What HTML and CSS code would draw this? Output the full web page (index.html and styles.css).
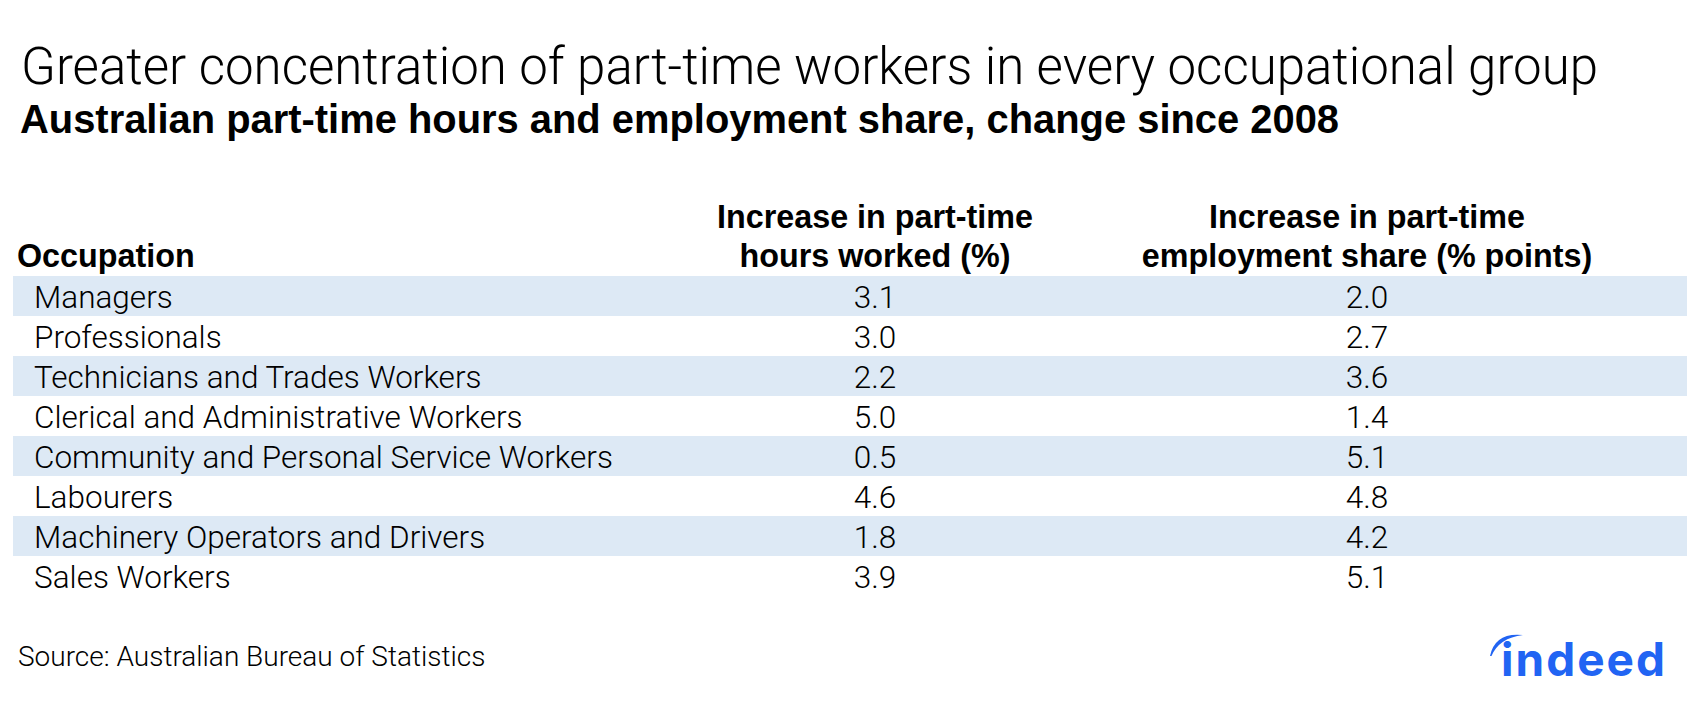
FILE: index.html
```html
<!DOCTYPE html>
<html lang="en">
<head>
<meta charset="utf-8">
<title>Part-time workers by occupation</title>
<link rel="stylesheet" href="styles.css">
</head>
<body>
<div class="page">
  <h1 class="title">Greater concentration of part-time workers in every occupational group</h1>
  <h2 class="subtitle">Australian part-time hours and employment share, change since 2008</h2>

  <div class="table">
    <div class="thead">
      <div class="th occ">Occupation</div>
      <div class="th num">Increase in part-time<br>hours worked (%)</div>
      <div class="th num">Increase in part-time<br>employment share (% points)</div>
      <div class="th"></div>
    </div>
    <div class="tr band"><div class="td occ">Managers</div><div class="td num">3.1</div><div class="td num">2.0</div><div class="td"></div></div>
    <div class="tr"><div class="td occ">Professionals</div><div class="td num">3.0</div><div class="td num">2.7</div><div class="td"></div></div>
    <div class="tr band"><div class="td occ">Technicians and Trades Workers</div><div class="td num">2.2</div><div class="td num">3.6</div><div class="td"></div></div>
    <div class="tr"><div class="td occ">Clerical and Administrative Workers</div><div class="td num">5.0</div><div class="td num">1.4</div><div class="td"></div></div>
    <div class="tr band"><div class="td occ">Community and Personal Service Workers</div><div class="td num">0.5</div><div class="td num">5.1</div><div class="td"></div></div>
    <div class="tr"><div class="td occ">Labourers</div><div class="td num">4.6</div><div class="td num">4.8</div><div class="td"></div></div>
    <div class="tr band"><div class="td occ">Machinery Operators and Drivers</div><div class="td num">1.8</div><div class="td num">4.2</div><div class="td"></div></div>
    <div class="tr"><div class="td occ">Sales Workers</div><div class="td num">3.9</div><div class="td num">5.1</div><div class="td"></div></div>
  </div>

  <div class="footer">
    <p class="source">Source: Australian Bureau of Statistics</p>
    <div class="logo">
      <svg class="logo-arc" width="36" height="26" viewBox="0 0 36 26" aria-hidden="true">
        <path d="M1 24 Q6 0 34 3 Q10 6 2.5 24 Z" fill="#2164f3"/>
      </svg>
      <span class="logo-word">indeed</span>
    </div>
  </div>
</div>
</body>
</html>
```

FILE: styles.css
```css
html, body {
  margin: 0;
  padding: 0;
  background: #ffffff;
}

body {
  font-family: "Liberation Sans", Arial, sans-serif;
  color: #000000;
}

.page {
  width: 1687px;
  height: 718px;
  padding-top: 39px;
  box-sizing: border-box;
  display: flex;
  flex-direction: column;
}

.title {
  margin: 0 0 0 21px;
  font-family: Roboto, "Liberation Sans", sans-serif;
  font-weight: 300;
  font-size: 51px;
  line-height: 56px;
  white-space: nowrap;
}

.subtitle {
  margin: 2px 0 0 20px;
  font-size: 39.9px;
  line-height: 44px;
  font-weight: 700;
  white-space: nowrap;
}

.table {
  margin: 57px 0 0 13px;
  display: flex;
  flex-direction: column;
}

.thead,
.tr {
  display: grid;
  grid-template-columns: 617px 490px 494px 1fr;
}

.thead {
  align-items: end;
}

.th {
  font-size: 32.3px;
  line-height: 39px;
  font-weight: 700;
  white-space: nowrap;
}

.th.occ {
  padding-left: 4px;
}

.tr {
  height: 40px;
  align-items: stretch;
}

.tr.band {
  background: #dde9f5;
}

.td {
  font-family: Roboto, "Liberation Sans", sans-serif;
  font-weight: 300;
  font-size: 31.5px;
  line-height: 36px;
  padding-top: 4px;
  white-space: nowrap;
}

.td.occ {
  padding-left: 21px;
}

.num {
  text-align: center;
}

.footer {
  margin-top: 40px;
  display: flex;
  justify-content: space-between;
  align-items: flex-start;
  padding: 0 20px 0 18px;
}

.source {
  margin: 5px 0 0 0;
  font-family: Roboto, "Liberation Sans", sans-serif;
  font-weight: 300;
  font-size: 28px;
  line-height: 32px;
}

.logo {
  position: relative;
}

.logo-arc {
  position: absolute;
  left: -12px;
  top: -4px;
}

.logo-word {
  display: block;
  font-family: Inter, "Noto Sans", sans-serif;
  font-weight: 700;
  font-size: 46px;
  line-height: 46px;
  letter-spacing: 2px;
  color: #2164f3;
}
```
